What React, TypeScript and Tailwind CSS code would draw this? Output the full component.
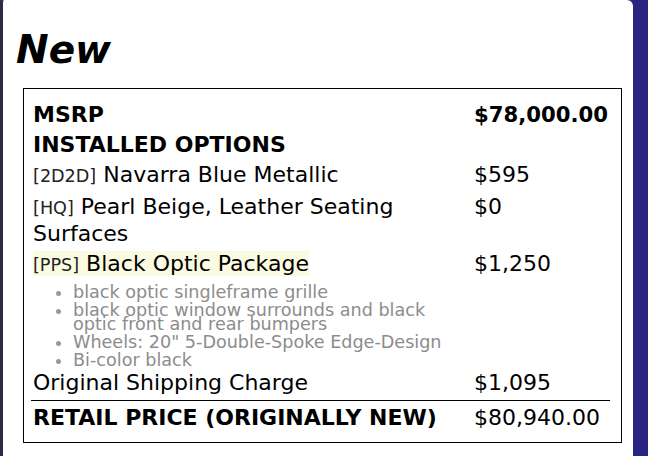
const options = [
  { code: '2D2D', name: 'Navarra Blue Metallic', price: '$595' },
  { code: 'HQ', name: 'Pearl Beige, Leather Seating Surfaces', price: '$0' },
];

const packageItems = [
  'black optic singleframe grille',
  'black optic window surrounds and black optic front and rear bumpers',
  'Wheels: 20" 5-Double-Spoke Edge-Design',
  'Bi-color black',
];

export default function App() {
  return (
    <div
      className="flex w-[648px] h-[456px] bg-[#2a2482] overflow-hidden text-black"
      style={{ fontFamily: '"DejaVu Sans", "Liberation Sans", sans-serif' }}
    >
      <div className="w-[633px] h-full bg-white border-l-[3px] border-[#2c2b46] rounded-tr-[6px] rounded-tl-[4px]">
        <h1 className="pt-[28px] pl-[13px] text-[39px] leading-[44px] font-bold italic">New</h1>

        <div className="mt-[16px] ml-[20px] w-[599px] h-[355px] border border-black pt-[10.5px]">
          <table className="table-fixed ml-[7px] w-[579px] text-[22px] leading-[25.6px]">
            <colgroup>
              <col className="w-[441px]" />
              <col className="w-[138px]" />
            </colgroup>
            <tbody>
              <tr className="font-bold">
                <td className="px-[2px] py-[2.2px]">MSRP</td>
                <td className="px-[2px] py-[2.2px] whitespace-nowrap text-[21.2px]">$78,000.00</td>
              </tr>
              <tr className="font-bold">
                <td className="px-[2px] py-[2.2px]" colSpan={2}>INSTALLED OPTIONS</td>
              </tr>
              {options.map((o) => (
                <tr key={o.code}>
                  <td className="px-[2px] py-[2.2px] align-top">
                    <span className="text-[17.6px] text-[#222]">[{o.code}]</span> {o.name}
                  </td>
                  <td className="px-[2px] py-[2.2px] align-top">{o.price}</td>
                </tr>
              ))}
              <tr>
                <td className="px-[2px] py-[2.2px] align-top">
                  <span className="bg-[#fbfbe2]">
                    <span className="text-[17.6px] text-[#222]">[PPS]</span> Black Optic Package
                  </span>
                </td>
                <td className="px-[2px] py-[2.2px] align-top">$1,250</td>
              </tr>
              <tr>
                <td className="px-[2px] py-0">
                  <ul className="list-disc pl-[40px] pt-[0.5px] text-[17.6px] leading-[14px] text-[#8c8c8c] marker:text-[#999]">
                    {packageItems.map((item) => (
                      <li key={item} className="mt-[4px]">{item}</li>
                    ))}
                  </ul>
                </td>
                <td />
              </tr>
              <tr>
                <td className="px-[2px] pt-[2.2px] pb-[5.2px]">Original Shipping Charge</td>
                <td className="px-[2px] pt-[2.2px] pb-[5.2px]">$1,095</td>
              </tr>
              <tr className="border-t border-black">
                <td className="px-[2px] pt-[3.2px] pb-[3px] font-bold whitespace-nowrap">RETAIL PRICE (ORIGINALLY NEW)</td>
                <td className="px-[2px] pt-[3.2px] pb-[3px] whitespace-nowrap">$80,940.00</td>
              </tr>
            </tbody>
          </table>
        </div>
      </div>
    </div>
  );
}
